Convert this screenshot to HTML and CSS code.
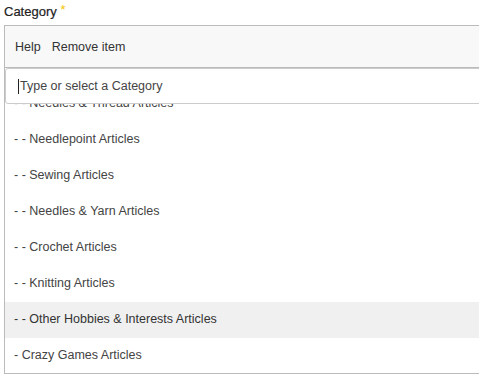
FILE: index.html
```html
<!DOCTYPE html>
<html lang="en">
<head>
  <meta charset="UTF-8">
  <title>Category</title>
  <link rel="stylesheet" href="styles.css">
</head>
<body>
  <div class="field">
    <label class="label">Category <span class="req">*</span></label>

    <div class="box">
      <div class="toolbar">
        <span>Help</span>
        <span>Remove item</span>
      </div>

      <div class="search"><span class="caret"></span>Type or select a Category</div>

      <ul class="options">
        <li class="first">- - Needles &amp; Thread Articles</li>
        <li>- - Needlepoint Articles</li>
        <li>- - Sewing Articles</li>
        <li>- - Needles &amp; Yarn Articles</li>
        <li>- - Crochet Articles</li>
        <li>- - Knitting Articles</li>
        <li class="hover">- - Other Hobbies &amp; Interests Articles</li>
        <li>- Crazy Games Articles</li>
      </ul>
    </div>
  </div>
</body>
</html>
```

FILE: styles.css
```css
html, body {
  margin: 0;
  padding: 0;
}
body {
  font-family: "Liberation Sans", Arial, sans-serif;
  background: #fff;
  color: #333;
  overflow: hidden;
}
.field {
  padding-left: 4px;
}
.label {
  display: block;
  height: 25px;
  padding-top: 3px;
  box-sizing: border-box;
  font-size: 13px;
  line-height: 18px;
  color: #222;
  -webkit-text-stroke: 0.2px #222;
}
.req {
  color: #f5c400;
  font-size: 13px;
  line-height: 13px;
  vertical-align: top;
  -webkit-text-stroke: 0;
}
.box {
  width: 520px;
  border: 1px solid #bbb;
  border-right: none;
}
.toolbar {
  display: flex;
  align-items: center;
  gap: 11px;
  height: 41px;
  padding-left: 10px;
  background: #f8f8f8;
  border-bottom: 1px solid #bbb;
  font-size: 12.5px;
  color: #333;
}
.search {
  position: relative;
  z-index: 1;
  height: 34px;
  padding-left: 12px;
  border: 1px solid #ccc;
  border-radius: 3px;
  background: #fff;
  display: flex;
  align-items: center;
  font-size: 12.5px;
  color: #444;
}
.caret {
  display: inline-block;
  width: 1px;
  height: 15px;
  background: #222;
  margin-right: 1px;
}
.options {
  list-style: none;
  margin: 0;
  padding: 0;
  height: 269px;
  overflow: hidden;
}
.options li {
  height: 36px;
  box-sizing: border-box;
  line-height: 34px;
  padding: 0 0 2px 9px;
  font-size: 12.5px;
  color: #444;
}
.options li.first {
  margin-top: -18px;
}
.options li.hover {
  background: #f0f0f0;
  color: #333;
}
```
